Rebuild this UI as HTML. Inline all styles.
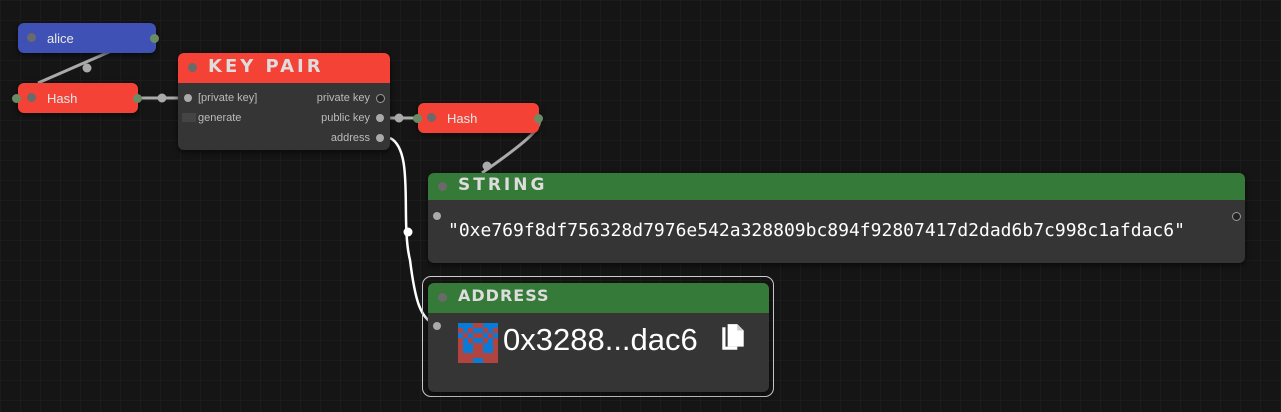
<!DOCTYPE html>
<html><head><style>
body{margin:0;width:1281px;height:412px;overflow:hidden;background:#151515;
background-image:linear-gradient(#1c1c1c 1px,transparent 1px),linear-gradient(90deg,#1c1c1c 1px,transparent 1px);background-size:20px 20px;font-family:"Liberation Sans",sans-serif;position:relative}
.n{position:absolute;border-radius:6px;box-shadow:0 2px 6px rgba(0,0,0,.6)}
.dot{position:absolute;width:9px;height:9px;border-radius:50%;background:#6a6a6a}
.p{position:absolute;width:8px;height:8px;border-radius:50%;background:#aaa}
.g{position:absolute;width:9px;height:9px;border-radius:50%;background:#6a8c65}
.t{position:absolute;color:#e8e8e8;font-size:13px}
.h{position:absolute;color:#ddd;font-weight:900;font-size:18px;letter-spacing:3px;font-family:"DejaVu Sans",sans-serif}
.s{position:absolute;color:#bbb;font-size:11px}
.o{position:absolute;width:7px;height:7px;border-radius:50%;border:1px solid #999;background:#222}
</style></head><body>
<svg width="1281" height="412" style="position:absolute;left:0;top:0">
<g stroke="#aaa" stroke-width="3" fill="none">
<path d="M38 83 L125 45"/><path d="M138 98 L178 98"/><path d="M390 118 L418 118"/><path d="M539 120 C545 130 500 160 482 173"/>
</g>
<path d="M390 138 C415 150 400 220 410 260 C415 300 420 320 438 326" stroke="#fff" stroke-width="2.5" fill="none"/>
<circle cx="87" cy="68" r="4.5" fill="#aaa"/><circle cx="162" cy="98" r="4.5" fill="#aaa"/><circle cx="399" cy="118" r="4.5" fill="#aaa"/><circle cx="487" cy="166" r="4.5" fill="#aaa"/><circle cx="408" cy="232" r="4.5" fill="#fff"/>
</svg>
<div class="n" style="left:18px;top:23px;width:138px;height:30px;background:#3f51b5"></div>
<div class="dot" style="left:27px;top:33px"></div><div class="t" style="left:47px;top:31px">alice</div><div class="g" style="left:150px;top:34px"></div>
<div class="n" style="left:18px;top:83px;width:120px;height:30px;background:#f44336"></div>
<div class="dot" style="left:27px;top:93px"></div><div class="t" style="left:47px;top:91px">Hash</div><div class="g" style="left:12px;top:94px"></div><div class="g" style="left:133px;top:94px"></div>
<div class="n" style="left:178px;top:53px;width:212px;height:97px;background:#353535;overflow:hidden"><div style="height:30px;background:#f44336"></div></div>
<div class="dot" style="left:188px;top:63px"></div><div class="h" style="left:208px;top:56px;color:#ddd">KEY PAIR</div>
<div class="p" style="left:184px;top:94px"></div><div class="s" style="left:198px;top:92px">[private key]</div>
<div style="position:absolute;left:182px;top:113px;width:14px;height:9px;background:#444"></div><div class="s" style="left:198px;top:112px">generate</div>
<div class="s" style="left:292px;top:92px;width:78px;text-align:right">private key</div><div class="o" style="left:376px;top:94px"></div>
<div class="s" style="left:292px;top:112px;width:78px;text-align:right">public key</div><div class="p" style="left:376px;top:114px"></div>
<div class="s" style="left:292px;top:132px;width:78px;text-align:right">address</div><div class="p" style="left:376px;top:134px"></div>
<div class="n" style="left:418px;top:103px;width:121px;height:30px;background:#f44336"></div>
<div class="dot" style="left:427px;top:113px"></div><div class="t" style="left:447px;top:111px">Hash</div><div class="g" style="left:413px;top:114px"></div><div class="g" style="left:534px;top:114px"></div>
<div class="n" style="left:428px;top:173px;width:817px;height:90px;background:#353535;overflow:hidden"><div style="height:27px;background:#357a38"></div></div>
<div class="dot" style="left:438px;top:182px"></div><div class="h" style="left:458px;top:175px;font-size:17px">STRING</div>
<div class="p" style="left:433px;top:212px"></div><div class="o" style="left:1232px;top:212px"></div>
<div class="t" style="left:448px;top:220px;font-family:'DejaVu Sans Mono',monospace;font-size:18px;color:#fff">"0xe769f8df756328d7976e542a328809bc894f92807417d2dad6b7c998c1afdac6"</div>
<div style="position:absolute;left:422px;top:276px;width:350px;height:119px;border:1.5px solid #ccc;border-radius:9px"></div>
<div class="n" style="left:428px;top:283px;width:341px;height:109px;background:#353535;overflow:hidden"><div style="height:30px;background:#357a38"></div></div>
<div class="dot" style="left:438px;top:293px"></div><div class="h" style="left:458px;top:286px;font-size:16px;letter-spacing:1px">ADDRESS</div>
<div class="p" style="left:433px;top:322px"></div>
<svg style="position:absolute;left:458px;top:323px" width="40" height="40" viewBox="0 0 8 8" shape-rendering="crispEdges">
<rect width="8" height="8" fill="#0a7ad4"/>
<g fill="#b04440"><rect x="3" y="0" width="2" height="1"/><rect x="0" y="1" width="1" height="1"/><rect x="2" y="1" width="1" height="1"/><rect x="5" y="1" width="1" height="1"/><rect x="7" y="1" width="1" height="1"/><rect x="1" y="2" width="1" height="1"/><rect x="3" y="2" width="2" height="1"/><rect x="6" y="2" width="1" height="1"/><rect x="0" y="3" width="1" height="1"/><rect x="2" y="3" width="1" height="1"/><rect x="5" y="3" width="1" height="1"/><rect x="7" y="3" width="1" height="1"/><rect x="0" y="4" width="1" height="2"/><rect x="7" y="4" width="1" height="2"/><rect x="3" y="5" width="2" height="1"/><rect x="0" y="6" width="8" height="1"/><rect x="0" y="7" width="3" height="1"/><rect x="5" y="7" width="3" height="1"/><rect x="3" y="4" width="2" height="1"/></g>
</svg>
<div class="t" style="left:503px;top:322px;font-size:31px;color:#fff">0x3288...dac6</div>
<svg style="position:absolute;left:720px;top:323px" width="26" height="30" viewBox="0 0 24 28">
<path d="M2 4 H5 V22 H16 V25 H2 Z" fill="#fff"/><path d="M7 1 H16 L22 7 V22 H7 Z" fill="#fff"/><path d="M16 1 V7 H22" fill="#ccc"/>
</svg>
</body></html>
